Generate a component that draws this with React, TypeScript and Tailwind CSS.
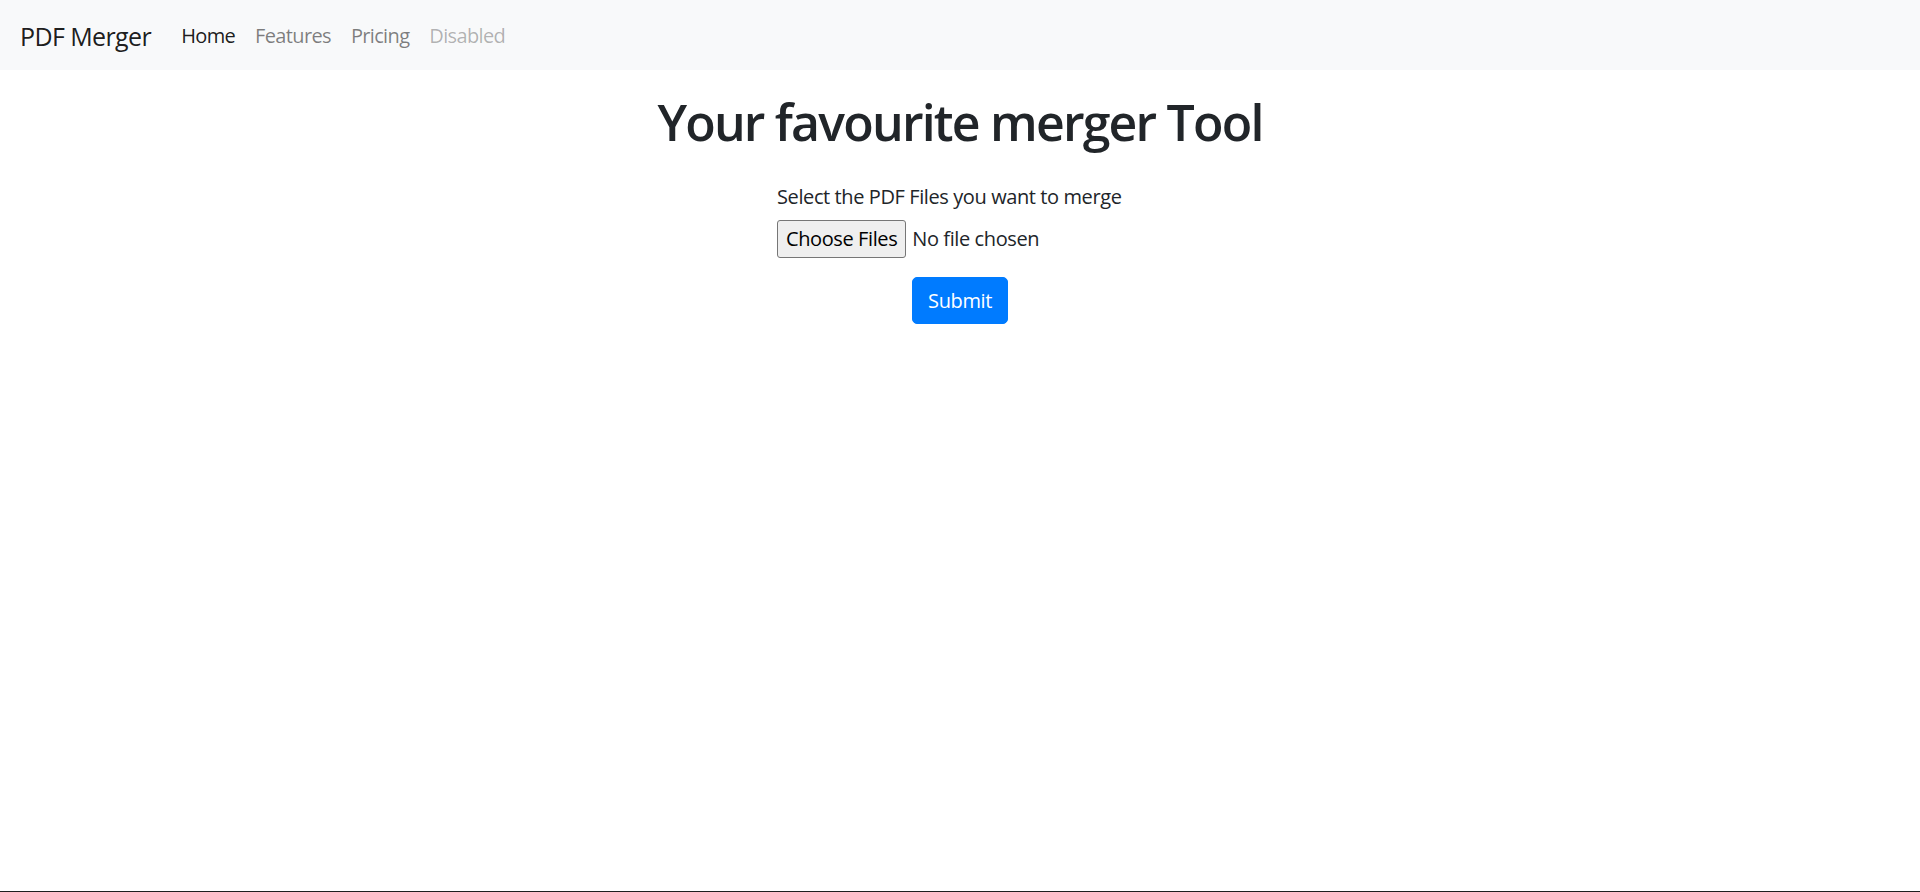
export default function App() {
    const links = [
        { label: "Home", className: "text-black/90" },
        { label: "Features", className: "text-black/50" },
        { label: "Pricing", className: "text-black/50" },
        { label: "Disabled", className: "text-black/30" },
    ];

    return (
        <div className="h-[892px] border-b border-[#1f1f1f] bg-white font-['Open_Sans',sans-serif] text-[#212529]">
            <nav className="flex h-[70px] items-center bg-[#f8f9fa] px-[20px] pt-[2px]">
                <a href="#" className="mr-[20px] text-[25px] leading-[38px] tracking-[-0.6px] text-black/90">
                    PDF Merger
                </a>
                <ul className="flex">
                    {links.map((link) => (
                        <li key={link.label}>
                            <a
                                href="#"
                                className={`block px-[10px] text-[20px] leading-[30px] tracking-[-0.65px] ${link.className}`}
                            >
                                {link.label}
                            </a>
                        </li>
                    ))}
                </ul>
            </nav>

            <main className="text-center">
                <h1 className="mt-[22px] mb-[10px] text-[50px] leading-[60px] font-semibold tracking-[-1.8px]">
                    Your favourite merger Tool
                </h1>

                <form className="mx-auto mt-[30px] w-[366px]" onSubmit={(e) => e.preventDefault()}>
                    <div className="text-left tracking-[-0.4px]">
                        <label htmlFor="pdfs" className="mb-[8px] block text-[20px] leading-[30px]">
                            Select the PDF Files you want to merge
                        </label>
                        <input
                            id="pdfs"
                            type="file"
                            multiple
                            accept="application/pdf"
                            className="block text-[20px] leading-[28px] file:mr-[6px] file:rounded-[3px] file:border file:border-[#767676] file:bg-[#efefef] file:px-[8px] file:py-[4px] file:text-black"
                        />
                    </div>
                    <button
                        type="submit"
                        className="mt-[19px] rounded-[5px] border border-[#007bff] bg-[#007bff] px-[15px] py-[7px] text-[20px] leading-[31px] tracking-[-0.4px] text-white"
                    >
                        Submit
                    </button>
                </form>
            </main>
        </div>
    );
}
